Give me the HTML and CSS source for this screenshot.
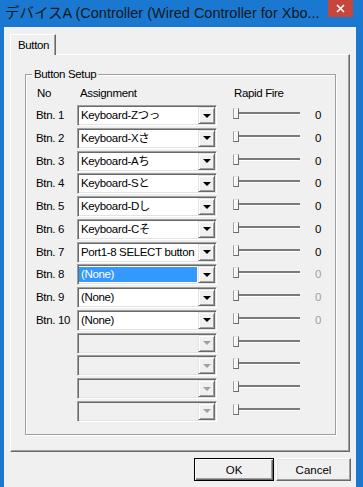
FILE: index.html
```html
<!DOCTYPE html>
<html lang="ja">
<head>
    <meta charset="UTF-8">
    <title>デバイスA</title>
    <link rel="stylesheet" href="styles.css">
</head>
<body>
    <div class="window">
        <div class="titlebar">
            <span class="title">デバイスA (Controller (Wired Controller for Xbo...</span>
            <span class="close">
                <svg width="9" height="9" viewBox="0 0 9 9"><path d="M1 1L8 8M8 1L1 8" stroke="#fff" stroke-width="1.6"/></svg>
            </span>
        </div>
        <div class="client">
            <div class="tabs">
                <div class="tab">Button</div>
            </div>
            <div class="panel">
                <div class="group">
                    <span class="group-title">Button Setup</span>
                    <div class="row head">
                        <span class="h-no">No</span>
                        <span class="h-assign">Assignment</span>
                        <span class="h-rapid">Rapid Fire</span>
                    </div>

                    <div class="row">
                        <span class="label">Btn. 1</span>
                        <div class="combo"><span class="combo-text">Keyboard-Zつっ</span><span class="combo-arrow"><i></i></span></div>
                        <div class="slider"><span class="thumb"></span><span class="track"></span></div>
                        <span class="value">0</span>
                    </div>
                    <div class="row">
                        <span class="label">Btn. 2</span>
                        <div class="combo"><span class="combo-text">Keyboard-Xさ</span><span class="combo-arrow"><i></i></span></div>
                        <div class="slider"><span class="thumb"></span><span class="track"></span></div>
                        <span class="value">0</span>
                    </div>
                    <div class="row">
                        <span class="label">Btn. 3</span>
                        <div class="combo"><span class="combo-text">Keyboard-Aち</span><span class="combo-arrow"><i></i></span></div>
                        <div class="slider"><span class="thumb"></span><span class="track"></span></div>
                        <span class="value">0</span>
                    </div>
                    <div class="row">
                        <span class="label">Btn. 4</span>
                        <div class="combo"><span class="combo-text">Keyboard-Sと</span><span class="combo-arrow"><i></i></span></div>
                        <div class="slider"><span class="thumb"></span><span class="track"></span></div>
                        <span class="value">0</span>
                    </div>
                    <div class="row">
                        <span class="label">Btn. 5</span>
                        <div class="combo"><span class="combo-text">Keyboard-Dし</span><span class="combo-arrow"><i></i></span></div>
                        <div class="slider"><span class="thumb"></span><span class="track"></span></div>
                        <span class="value">0</span>
                    </div>
                    <div class="row">
                        <span class="label">Btn. 6</span>
                        <div class="combo"><span class="combo-text">Keyboard-Cそ</span><span class="combo-arrow"><i></i></span></div>
                        <div class="slider"><span class="thumb"></span><span class="track"></span></div>
                        <span class="value">0</span>
                    </div>
                    <div class="row">
                        <span class="label">Btn. 7</span>
                        <div class="combo"><span class="combo-text">Port1-8 SELECT button</span><span class="combo-arrow"><i></i></span></div>
                        <div class="slider"><span class="thumb"></span><span class="track"></span></div>
                        <span class="value">0</span>
                    </div>
                    <div class="row">
                        <span class="label">Btn. 8</span>
                        <div class="combo"><span class="combo-text selected">(None)</span><span class="combo-arrow"><i></i></span></div>
                        <div class="slider"><span class="thumb"></span><span class="track"></span></div>
                        <span class="value off">0</span>
                    </div>
                    <div class="row">
                        <span class="label">Btn. 9</span>
                        <div class="combo"><span class="combo-text">(None)</span><span class="combo-arrow"><i></i></span></div>
                        <div class="slider"><span class="thumb"></span><span class="track"></span></div>
                        <span class="value off">0</span>
                    </div>
                    <div class="row">
                        <span class="label">Btn. 10</span>
                        <div class="combo"><span class="combo-text">(None)</span><span class="combo-arrow"><i></i></span></div>
                        <div class="slider"><span class="thumb"></span><span class="track"></span></div>
                        <span class="value off">0</span>
                    </div>

                    <div class="row">
                        <span class="label"></span>
                        <div class="combo disabled"><span class="combo-text"></span><span class="combo-arrow"><i></i></span></div>
                        <div class="slider"><span class="thumb"></span><span class="track"></span></div>
                    </div>
                    <div class="row">
                        <span class="label"></span>
                        <div class="combo disabled"><span class="combo-text"></span><span class="combo-arrow"><i></i></span></div>
                        <div class="slider"><span class="thumb"></span><span class="track"></span></div>
                    </div>
                    <div class="row">
                        <span class="label"></span>
                        <div class="combo disabled"><span class="combo-text"></span><span class="combo-arrow"><i></i></span></div>
                        <div class="slider"><span class="thumb"></span><span class="track"></span></div>
                    </div>
                    <div class="row">
                        <span class="label"></span>
                        <div class="combo disabled"><span class="combo-text"></span><span class="combo-arrow"><i></i></span></div>
                        <div class="slider"><span class="thumb"></span><span class="track"></span></div>
                    </div>
                </div>
            </div>
            <div class="actions">
                <button class="btn default">OK</button>
                <button class="btn">Cancel</button>
            </div>
        </div>
    </div>
</body>
</html>
```

FILE: styles.css
```css
* {
    box-sizing: border-box;
}
body {
    margin: 0;
    background: #1b78d0;
    font-family: "Liberation Sans", "Noto Sans CJK JP", sans-serif;
    font-size: 11.5px;
    letter-spacing: -0.35px;
    color: #000;
}
.window {
    width: 363px;
    height: 487px;
    display: flex;
    flex-direction: column;
}
.titlebar {
    height: 27px;
    display: flex;
    align-items: flex-start;
}
.title {
    font-size: 14.5px;
    letter-spacing: 0;
    line-height: 26px;
    padding-left: 5px;
    color: #101820;
    white-space: nowrap;
}
.close {
    margin-left: auto;
    margin-right: 10px;
    width: 25px;
    height: 17px;
    background: #c7463b;
    display: flex;
    align-items: center;
    justify-content: center;
}
.close svg {
    display: block;
}
.client {
    flex: 1;
    margin: 0 7px 0 4px;
    background: #f0f0f0;
    display: flex;
    flex-direction: column;
}
.tabs {
    display: flex;
    padding: 7px 0 0 6px;
}
.tab {
    position: relative;
    z-index: 1;
    width: 46px;
    height: 21px;
    margin-bottom: -1px;
    padding: 3px 0 0 7px;
    background: #f0f0f0;
    border-top: 1px solid #fff;
    border-left: 1px solid #fff;
    border-right: 1px solid #696969;
    box-shadow: inset -1px 0 0 #a0a0a0;
    line-height: 15px;
}
.panel {
    margin-left: 6px;
    width: 340px;
    height: 398px;
    border: 1px solid;
    border-color: #fff #696969 #696969 #fff;
    box-shadow: inset -1px -1px 0 #a0a0a0;
    padding: 19px 0 0 14px;
}
.group {
    position: relative;
    width: 311px;
    height: 361px;
    border: 1px solid #a0a0a0;
    box-shadow: inset 1px 1px 0 #fff, 1px 1px 0 #fff;
    padding: 7px 0 0 10px;
}
.group-title {
    position: absolute;
    top: -9px;
    left: 6px;
    padding: 0 2px;
    background: #f0f0f0;
    line-height: 16px;
}
.row {
    display: grid;
    grid-template-columns: 41px 140px 98px 1fr;
    height: 22.77px;
}
.row.head {
    height: 23px;
    line-height: 23px;
}
.h-no {
    padding-left: 1px;
}
.h-assign {
    padding-left: 3px;
}
.h-rapid {
    padding-left: 17px;
}
.label {
    line-height: 21px;
    white-space: nowrap;
}
.combo {
    height: 21px;
    display: flex;
    background: #fff;
    border: 1px solid;
    border-color: #a0a0a0 #fff #fff #a0a0a0;
    box-shadow: inset 1px 1px 0 #696969, inset -1px -1px 0 #e3e3e3;
    padding: 1px;
}
.combo-text {
    flex: 1;
    padding-left: 2px;
    line-height: 17px;
    white-space: nowrap;
    overflow: hidden;
}
.combo-text.selected {
    margin: 1px 1px 1px 0;
    line-height: 15px;
    background: #3399ff;
    color: #fff;
}
.combo-arrow {
    width: 17px;
    height: 17px;
    background: #f0f0f0;
    border: 1px solid;
    border-color: #e3e3e3 #696969 #696969 #e3e3e3;
    box-shadow: inset 1px 1px 0 #fff, inset -1px -1px 0 #a0a0a0;
    display: flex;
    align-items: center;
    justify-content: center;
}
.combo-arrow i {
    display: block;
    width: 0;
    height: 0;
    border-left: 4px solid transparent;
    border-right: 4px solid transparent;
    border-top: 4px solid #000;
}
.combo.disabled {
    background: #f0f0f0;
}
.combo.disabled .combo-arrow i {
    border-top-color: #a0a0a0;
}
.slider {
    margin-left: 16px;
    height: 17px;
    display: flex;
    align-items: center;
}
.thumb {
    flex: none;
    width: 6px;
    height: 11px;
    background: #f4f4f4;
    border: 1px solid;
    border-color: #e3e3e3 #696969 #696969 #a0a0a0;
    box-shadow: inset 1px 1px 0 #fff;
}
.track {
    flex: none;
    width: 61px;
    height: 3px;
    border-bottom: 1px solid #fff;
    background: #7a7a7a;
}
.value {
    line-height: 21px;
}
.value.off {
    color: #a0a0a0;
}
.actions {
    display: flex;
    justify-content: flex-end;
    gap: 2px;
    padding: 6px 5px 0 0;
}
.btn {
    width: 75px;
    height: 23px;
    margin: 0;
    padding: 0;
    font: inherit;
    letter-spacing: 0;
    color: #000;
    background: #f0f0f0;
    border: 1px solid;
    border-color: #fff #696969 #696969 #fff;
    box-shadow: inset -1px -1px 0 #a0a0a0, inset 1px 1px 0 #e3e3e3;
}
.btn.default {
    width: 80px;
    border: 1px solid #000;
    box-shadow: inset 1px 1px 0 #fff, inset -1px -1px 0 #696969, inset -2px -2px 0 #a0a0a0;
}
```
